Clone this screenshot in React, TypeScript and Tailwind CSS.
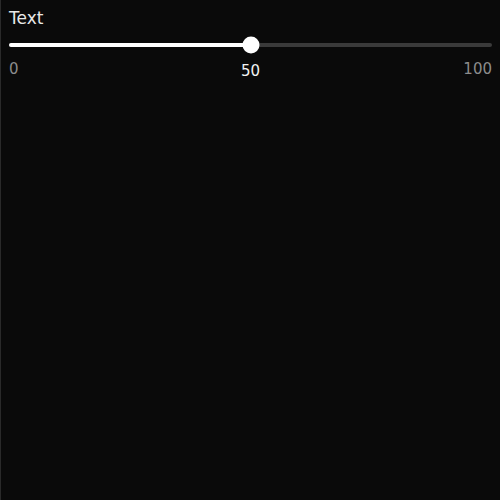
import { useState } from "react";

const SliderField = ({ label, min, max }: { label: string; min: number; max: number }) => {
  const [value] = useState<number>(50);
  const pct = ((value - min) / (max - min)) * 100;

  return (
    <div className="flex flex-col">
      <span className="text-[17px] leading-[21px] text-[#e8e8e8]">{label}</span>
      <div className="relative mt-[14px] h-[4px] w-full rounded-full bg-[#3a3a3a]">
        <div className="h-full rounded-full bg-white" style={{ width: `${pct}%` }} />
        <div
          className="absolute top-1/2 h-[17px] w-[17px] -translate-x-1/2 -translate-y-1/2 rounded-full bg-white"
          style={{ left: `${pct}%` }}
        />
      </div>
      <div className="relative mt-[13px] flex h-[18px] items-start justify-between text-[15px] leading-[18px] text-[#8c8c8c]">
        <span>{min}</span>
        <span
          className="absolute top-[2px] -translate-x-1/2 text-[#f2f2f2]"
          style={{ left: `${pct}%` }}
        >
          {value}
        </span>
        <span>{max}</span>
      </div>
    </div>
  );
};

export default function App() {
  return (
    <div className="h-[500px] w-[500px] border-l border-[#2a2a2a] bg-[#0a0a0a] px-[8px] pt-[8px] font-['DejaVu_Sans',sans-serif]">
      <SliderField label="Text" min={0} max={100} />
    </div>
  );
}
